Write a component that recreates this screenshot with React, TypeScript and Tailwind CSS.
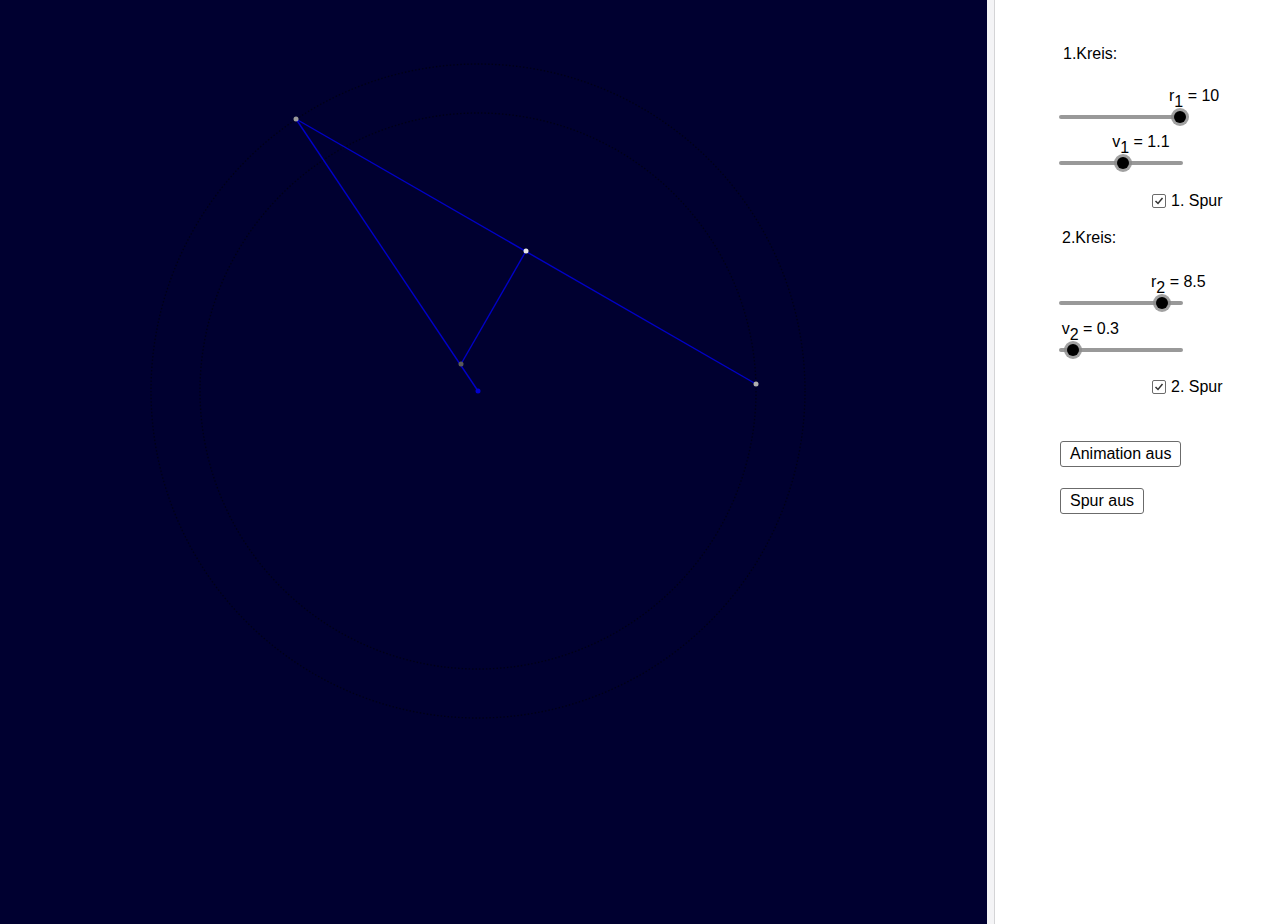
import React from 'react';

// slider geometry: thumb travels 120px across the track
const TRACK = 120;

interface SliderProps {
  name: string;
  sub: string;
  value: number;
  min: number;
  max: number;
  text: string;
}

const Slider: React.FC<SliderProps> = ({ name, sub, value, min, max, text }) => {
  const pos = 1 + ((value - min) / (max - min)) * TRACK;
  return (
    <div className="w-[130px]">
      <div className="relative h-[18px]">
        <span
          className="absolute top-0 whitespace-nowrap leading-[18px]"
          style={{ left: pos - 11 }}
        >
          {name}
          <span className="align-[-6px]">{sub}</span> = {text}
        </span>
      </div>
      <div className="relative h-[24px] flex items-center">
        <div className="h-[4px] w-[124px] rounded-full bg-[#999999]" />
        <div
          className="absolute top-[3px] flex h-[18px] w-[18px] -translate-x-1/2 items-center justify-center rounded-full bg-[#8a8a8a]/80"
          style={{ left: pos }}
        >
          <div className="h-[12px] w-[12px] rounded-full bg-black" />
        </div>
      </div>
    </div>
  );
};

const Check: React.FC<{ label: string }> = ({ label }) => (
  <div className="flex h-[18px] items-center pl-[93px]">
    <span className="flex h-[14px] w-[14px] items-center justify-center rounded-[2px] border border-[#6b6b6b] bg-white">
      <svg width="12" height="12" viewBox="0 0 12 12">
        <path d="M2.5 6 L5 8.5 L9.5 3" fill="none" stroke="#333" strokeWidth="1.5" />
      </svg>
    </span>
    <span className="ml-[5px] leading-[18px]">{label}</span>
  </div>
);

const Canvas: React.FC = () => {
  const M = { x: 478, y: 391 };
  const P1 = { x: 296, y: 119 };
  const P2 = { x: 756, y: 384 };
  const Q = { x: 461, y: 364 };
  const H = { x: 526, y: 251 };
  return (
    <svg width="987" height="924" viewBox="0 0 987 924" className="block">
      {/* traces */}
      <circle cx={M.x} cy={M.y} r="327" fill="none" stroke="#000000" strokeWidth="1.4" strokeDasharray="1.5 2" opacity="0.55" />
      <circle cx={M.x} cy={M.y} r="278" fill="none" stroke="#000000" strokeWidth="1.4" strokeDasharray="1.5 2" opacity="0.55" />
      <g stroke="#0000c8" strokeWidth="1.4">
        <line x1={P1.x} y1={P1.y} x2={P2.x} y2={P2.y} />
        <line x1={P1.x} y1={P1.y} x2={M.x} y2={M.y} />
        <line x1={Q.x} y1={Q.y} x2={H.x} y2={H.y} />
      </g>
      <circle cx={P1.x} cy={P1.y} r="2.5" fill="#9a9a9a" />
      <circle cx={P2.x} cy={P2.y} r="2.5" fill="#b0b0b0" />
      <circle cx={H.x} cy={H.y} r="2.5" fill="#e6e6e6" />
      <circle cx={Q.x} cy={Q.y} r="2.5" fill="#5a5a5a" />
      <circle cx={M.x} cy={M.y} r="2.5" fill="#0000d0" />
    </svg>
  );
};

export default function App() {
  return (
    <div className="flex h-[924px] w-[1284px] overflow-hidden bg-white text-[16px] text-black" style={{ fontFamily: '"Liberation Sans", Arial, sans-serif' }}>
      <div className="w-[987px] bg-[#000030]">
        <Canvas />
      </div>
      <div className="w-[8px] border-r border-[#d4d4d6] bg-[#f4f4f6]" />
      <div className="flex flex-1 flex-col pl-[64px] pt-[45px]">
        <div className="pl-[4px] leading-[18px]">1.Kreis:</div>
        <div className="mt-[24px]">
          <Slider name="r" sub="1" value={10} min={0} max={10} text="10" />
        </div>
        <div className="mt-[4px]">
          <Slider name="v" sub="1" value={1.1} min={0.1} max={2} text="1.1" />
        </div>
        <div className="mt-[17px]">
          <Check label="1. Spur" />
        </div>
        <div className="mt-[19px] pl-[3px] leading-[18px]">2.Kreis:</div>
        <div className="mt-[26px]">
          <Slider name="r" sub="2" value={8.5} min={0} max={10} text="8.5" />
        </div>
        <div className="mt-[5px]">
          <Slider name="v" sub="2" value={0.3} min={0.1} max={2} text="0.3" />
        </div>
        <div className="mt-[16px]">
          <Check label="2. Spur" />
        </div>
        <div className="mt-[45px] flex">
          <button className="ml-[1px] rounded-[3px] border border-[#6b6b6b] bg-white px-[9px] py-[3px] leading-[18px]">
            Animation aus
          </button>
        </div>
        <div className="mt-[21px] flex">
          <button className="ml-[1px] rounded-[3px] border border-[#6b6b6b] bg-white px-[9px] py-[3px] leading-[18px]">
            Spur aus
          </button>
        </div>
      </div>
    </div>
  );
}
